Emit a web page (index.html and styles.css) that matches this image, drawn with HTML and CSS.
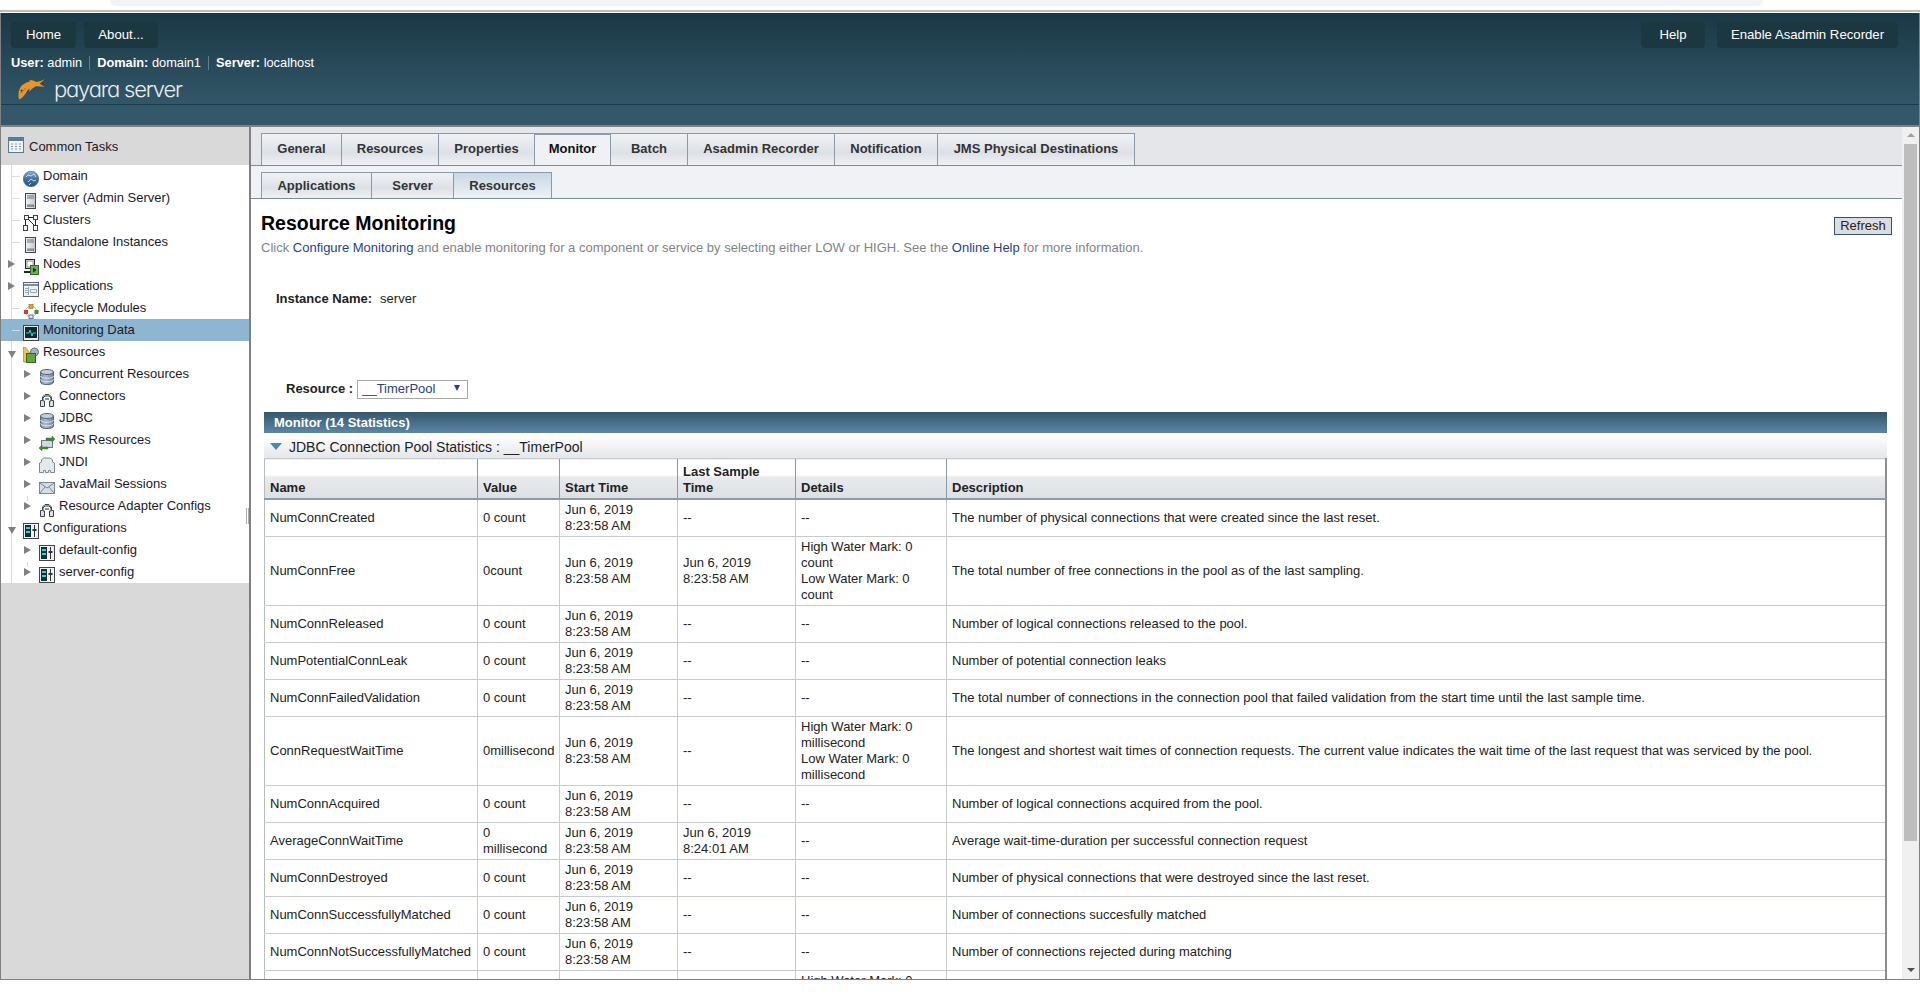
FILE: index.html
```html
<!DOCTYPE html>
<html lang="en">
<head>
<meta charset="utf-8">
<title>Payara Server</title>
<link rel="stylesheet" href="styles.css">
</head>
<body>
<svg class="defs" width="0" height="0">
  <defs>
    <linearGradient id="g-globe" x1="0" y1="0" x2="0" y2="1"><stop offset="0" stop-color="#8fb0cc"/><stop offset=".5" stop-color="#3f6f9f"/><stop offset="1" stop-color="#2a5585"/></linearGradient>
    <linearGradient id="g-srv" x1="0" y1="0" x2="1" y2="0"><stop offset="0" stop-color="#f2f3f4"/><stop offset="1" stop-color="#c4c8cc"/></linearGradient>
    <linearGradient id="g-db" x1="0" y1="0" x2="1" y2="0"><stop offset="0" stop-color="#7f93aa"/><stop offset=".4" stop-color="#a9b9ca"/><stop offset="1" stop-color="#6f8299"/></linearGradient>
  </defs>
  <symbol id="i-globe" viewBox="0 0 16 16"><circle cx="8" cy="8" r="7.700" fill="url(#g-globe)" stroke="#2e5a87" stroke-width=".6"/><path d="M3 6l2-2 3 1 3-2 2 3M5 11l3-3 3 2 2-1M6 14l2-2" stroke="#cfe0ee" fill="none" stroke-width=".9"/></symbol>
  <symbol id="i-server" viewBox="0 0 16 16"><rect x="2.500" y="0.500" width="10" height="15" fill="url(#g-srv)" stroke="#43484e"/><path d="M4 3h7M4 5h7" stroke="#6b737b"/><path d="M4 11.500h7v2.500H4z" fill="#6f767d"/><path d="M5 11.500v2.500M7 11.500v2.500M9 11.500v2.500" stroke="#d5d8db" stroke-width=".6"/></symbol>
  <symbol id="i-clusters" viewBox="0 0 16 16"><g fill="#f3f5f7" stroke="#3f444a"><rect x="1.500" y="0.500" width="4" height="4"/><rect x="10.500" y="0.500" width="4" height="4"/><rect x="0.500" y="10.500" width="4" height="5"/><rect x="10.500" y="10.500" width="4" height="5"/></g><path d="M5.500 2.500h5M5 4l6.500 6.500M2.500 5v5.500M12.500 5v5.500" stroke="#222" fill="none"/></symbol>
  <symbol id="i-nodes" viewBox="0 0 16 16"><rect x="2.500" y="0.500" width="9" height="9" fill="#e8eaec" stroke="#222"/><rect x="4" y="2" width="6" height="6" fill="#fff" stroke="#555" stroke-width=".6"/><path d="M1 13h8" stroke="#222" stroke-width="2"/><rect x="7.500" y="6.500" width="8" height="9" fill="#6fb04f" stroke="#2f6b2a"/><path d="M10 8.500l3.500 2.500-3.500 2.500z" fill="#123" /></symbol>
  <symbol id="i-apps" viewBox="0 0 16 16"><rect x="0.500" y="1.500" width="15" height="14" fill="#eef0f3" stroke="#5b6670"/><path d="M1 4h14" stroke="#7d8f9f" stroke-width="2"/><path d="M5.500 6v8M2 7.500h3M2 9.500h3M2 11.500h3M7.500 8.500h6v3h-6z" stroke="#98a7b4" fill="none"/></symbol>
  <symbol id="i-life" viewBox="0 0 16 16"><circle cx="8" cy="8.500" r="5.500" fill="none" stroke="#a8b0b8"/><rect x="6" y="1.500" width="4" height="4" fill="#e9a52f" stroke="#8c6412" stroke-width=".6"/><rect x="1" y="7" width="4" height="4" fill="#d03a2b"/><rect x="11.500" y="7" width="4" height="4" fill="#3f8f38"/><rect x="6" y="12" width="4" height="3.500" fill="#dbe3ea" stroke="#5d7ea3"/></symbol>
  <symbol id="i-mon" viewBox="0 0 16 16"><rect x="0.500" y="0.500" width="15" height="15" fill="#e8eaec" stroke="#444"/><rect x="2" y="2" width="12" height="11" fill="#0c2a33"/><path d="M3 8h3l1-3 2 6 1-3h3" stroke="#3fd0c4" fill="none"/></symbol>
  <symbol id="i-res" viewBox="0 0 16 16"><path d="M.5 0v15H7V6L2 0z" fill="#f3c14d" stroke="#b9851b" stroke-width=".7"/><circle cx="11.500" cy="5" r="4" fill="#9fb1c2" stroke="#62778a"/><rect x="3.500" y="6.500" width="9" height="9" fill="#63a53d" stroke="#2e6d1d"/></symbol>
  <symbol id="i-db" viewBox="0 0 16 16"><path d="M1.500 3v10c0 3.500 13 3.500 13 0V3z" fill="url(#g-db)" stroke="#55667a"/><ellipse cx="8" cy="3" rx="6.500" ry="2.500" fill="#c3cfda" stroke="#55667a"/><path d="M1.500 7c0 3 13 3 13 0M1.500 10.500c0 3 13 3 13 0" stroke="#dfe6ec" fill="none"/></symbol>
  <symbol id="i-conn" viewBox="0 0 16 16"><path d="M1.500 15.500v-6h2V6l2.500-2.500h4L12.500 6v3.500h2v6h-4v-5.500H12V7l-2-2H6L4 7v3h1.500v5.500z" fill="#dfe2e5" stroke="#3f464f"/><rect x="6" y="7" width="4" height="2" fill="#8a939c"/></symbol>
  <symbol id="i-jms" viewBox="0 0 16 16"><rect x="2.500" y="5.500" width="11" height="7" fill="#cfd8e1" stroke="#6a7c8c"/><path d="M7 3h6V1l3 3-3 3V5H7z" fill="#3f8f2f" stroke="#1f5c17" stroke-width=".4"/><path d="M9 12H3v-2l-3 3 3 3v-2h6z" fill="#3f8f2f" stroke="#1f5c17" stroke-width=".4"/></symbol>
  <symbol id="i-jndi" viewBox="0 0 16 16"><path d="M.5 15.500V6l2-1V3l2-2h7l2 2v2l2 1v9.500h-4v-2h-2v2H6.500v-2h-2v2z" fill="#e6e9ec" stroke="#7b8793"/></symbol>
  <symbol id="i-mail" viewBox="0 0 16 16"><rect x="0.500" y="3.500" width="15" height="11" fill="#d6dde4" stroke="#76889a"/><path d="M1 4l7 5 7-5M1 14l5-6M15 14l-5-6" stroke="#76889a" fill="none"/></symbol>
  <symbol id="i-cfg" viewBox="0 0 16 16"><rect x="0.500" y="0.500" width="15" height="15" fill="#eef0f2" stroke="#444"/><rect x="2" y="2" width="6" height="12" fill="#0f3038"/><path d="M3 5h4M3 9h4" stroke="#3fd0c4" stroke-width="2"/><path d="M11.500 2v12" stroke="#333"/><path d="M9.500 7h4" stroke="#333" stroke-width="2"/></symbol>
  <symbol id="i-tasks" viewBox="0 0 16 16"><rect x="0.500" y="0.500" width="15" height="15" fill="#f1f4f7" stroke="#587a9b"/><path d="M1 2.500h14" stroke="#587a9b" stroke-width="3"/><path d="M3 7h2M7 7h2M11 7h2M3 9.500h2M7 9.500h2M11 9.500h2M3 12h2M7 12h2M11 12h2" stroke="#8a97a3"/></symbol>
</svg>

<div class="browser"><div class="browser-strip"></div><div class="browser-rule"></div></div>

<div class="frame">
  <header class="masthead">
    <div class="mast-top">
      <nav class="mast-btns">
        <a class="mast-btn mast-home">Home</a>
        <a class="mast-btn mast-about">About...</a>
      </nav>
      <nav class="mast-btns">
        <a class="mast-btn mast-help">Help</a>
        <a class="mast-btn mast-rec">Enable Asadmin Recorder</a>
      </nav>
    </div>
    <div class="mast-info">
      <span class="info-item"><b>User:</b> admin</span>
      <span class="info-item"><b>Domain:</b> domain1</span>
      <span class="info-item"><b>Server:</b> localhost</span>
    </div>
    <div class="brand">
      <svg class="fish" viewBox="0 0 28 22"><path d="M27.500 1C25 3 22 3.500 19.500 4 18 3.500 15 1.500 12 2L13.500 3.200C9 4 5 6.500 3 10 1.500 13 1 17 2 21.500 4 20.500 6 19 7.500 17 9.500 14.500 10 12 12.500 10.500L12 13.500C14.500 12 15.500 9.500 19 8.200 22 8 25 8.500 27.500 9 25.500 7.500 23.500 6.500 22.500 5.500 24 4.500 26 3 27.500 1Z" fill="#e8962a"/><path d="M3.500 15c2-1 4-3 5-5" stroke="#8a5410" fill="none" stroke-width=".7"/><circle cx="4.500" cy="12.500" r="1" fill="#5e3508"/></svg>
      <span class="brand-name">payara server</span>
    </div>
    <div class="mast-rule"></div>
  </header>

  <div class="workspace">
    <aside class="nav">
      <div class="nav-title"><svg class="ico ico-tasks"><use href="#i-tasks"/></svg><span>Common Tasks</span></div>
      <div class="tree">
        <div class="row"><span class="tw tick"></span><svg class="ico"><use href="#i-globe"/></svg><span>Domain</span></div>
        <div class="row"><span class="tw tick"></span><svg class="ico"><use href="#i-server"/></svg><span>server (Admin Server)</span></div>
        <div class="row"><span class="tw tick"></span><svg class="ico"><use href="#i-clusters"/></svg><span>Clusters</span></div>
        <div class="row"><span class="tw tick"></span><svg class="ico"><use href="#i-server"/></svg><span>Standalone Instances</span></div>
        <div class="row"><span class="tw closed"></span><svg class="ico"><use href="#i-nodes"/></svg><span>Nodes</span></div>
        <div class="row"><span class="tw closed"></span><svg class="ico"><use href="#i-apps"/></svg><span>Applications</span></div>
        <div class="row"><span class="tw tick"></span><svg class="ico"><use href="#i-life"/></svg><span>Lifecycle Modules</span></div>
        <div class="row selected"><span class="tw tick"></span><svg class="ico"><use href="#i-mon"/></svg><span>Monitoring Data</span></div>
        <div class="row"><span class="tw open"></span><svg class="ico"><use href="#i-res"/></svg><span>Resources</span></div>
        <div class="row sub"><span class="tw closed"></span><svg class="ico"><use href="#i-db"/></svg><span>Concurrent Resources</span></div>
        <div class="row sub"><span class="tw closed"></span><svg class="ico"><use href="#i-conn"/></svg><span>Connectors</span></div>
        <div class="row sub"><span class="tw closed"></span><svg class="ico"><use href="#i-db"/></svg><span>JDBC</span></div>
        <div class="row sub"><span class="tw closed"></span><svg class="ico"><use href="#i-jms"/></svg><span>JMS Resources</span></div>
        <div class="row sub"><span class="tw closed"></span><svg class="ico"><use href="#i-jndi"/></svg><span>JNDI</span></div>
        <div class="row sub"><span class="tw closed"></span><svg class="ico"><use href="#i-mail"/></svg><span>JavaMail Sessions</span></div>
        <div class="row sub stem"><span class="tw closed"></span><svg class="ico"><use href="#i-conn"/></svg><span>Resource Adapter Configs</span></div>
        <div class="row"><span class="tw open"></span><svg class="ico"><use href="#i-cfg"/></svg><span>Configurations</span></div>
        <div class="row sub"><span class="tw closed"></span><svg class="ico"><use href="#i-cfg"/></svg><span>default-config</span></div>
        <div class="row sub stem"><span class="tw closed"></span><svg class="ico"><use href="#i-cfg"/></svg><span>server-config</span></div>
      </div>
      <div class="nav-grip"></div>
    </aside>

    <main class="main">
      <div class="main-scroll">
        <div class="tabs tabs-1">
          <a class="tab t-gen">General</a><a class="tab t-res">Resources</a><a class="tab t-prop">Properties</a><a class="tab t-mon active">Monitor</a><a class="tab t-bat">Batch</a><a class="tab t-asa">Asadmin Recorder</a><a class="tab t-not">Notification</a><a class="tab t-jms">JMS Physical Destinations</a>
        </div>
        <div class="tabs tabs-2">
          <a class="tab s-app">Applications</a><a class="tab s-srv">Server</a><a class="tab s-res current">Resources</a>
        </div>
        <div class="page">
          <div class="page-head">
            <div>
              <h1>Resource Monitoring</h1>
              <p class="help">Click <a>Configure Monitoring</a> and enable monitoring for a component or service by selecting either LOW or HIGH. See the <a>Online Help</a> for more information.</p>
            </div>
            <button class="refresh">Refresh</button>
          </div>
          <div class="instance"><b>Instance Name:</b><span>server</span></div>
          <div class="resource"><b>Resource :</b><span class="select"><span>__TimerPool</span><i class="select-arrow"></i></span></div>
          <section class="monitor">
            <div class="monitor-title">Monitor (14 Statistics)</div>
            <div class="monitor-sub"><i class="disclose"></i>JDBC Connection Pool Statistics : __TimerPool</div>
            <table class="stats">
              <colgroup><col class="c1"><col class="c2"><col class="c3"><col class="c4"><col class="c5"><col></colgroup>
              <thead><tr><th>Name</th><th>Value</th><th>Start Time</th><th>Last Sample Time</th><th>Details</th><th>Description</th></tr></thead>
              <tbody>
                <tr><td>NumConnCreated</td><td>0 count</td><td>Jun 6, 2019<br>8:23:58 AM</td><td>--</td><td>--</td><td>The number of physical connections that were created since the last reset.</td></tr>
                <tr><td>NumConnFree</td><td>0count</td><td>Jun 6, 2019<br>8:23:58 AM</td><td>Jun 6, 2019<br>8:23:58 AM</td><td>High Water Mark: 0 count<br>Low Water Mark: 0 count</td><td>The total number of free connections in the pool as of the last sampling.</td></tr>
                <tr><td>NumConnReleased</td><td>0 count</td><td>Jun 6, 2019<br>8:23:58 AM</td><td>--</td><td>--</td><td>Number of logical connections released to the pool.</td></tr>
                <tr><td>NumPotentialConnLeak</td><td>0 count</td><td>Jun 6, 2019<br>8:23:58 AM</td><td>--</td><td>--</td><td>Number of potential connection leaks</td></tr>
                <tr><td>NumConnFailedValidation</td><td>0 count</td><td>Jun 6, 2019<br>8:23:58 AM</td><td>--</td><td>--</td><td>The total number of connections in the connection pool that failed validation from the start time until the last sample time.</td></tr>
                <tr><td>ConnRequestWaitTime</td><td>0millisecond</td><td>Jun 6, 2019<br>8:23:58 AM</td><td>--</td><td>High Water Mark: 0 millisecond<br>Low Water Mark: 0 millisecond</td><td>The longest and shortest wait times of connection requests. The current value indicates the wait time of the last request that was serviced by the pool.</td></tr>
                <tr><td>NumConnAcquired</td><td>0 count</td><td>Jun 6, 2019<br>8:23:58 AM</td><td>--</td><td>--</td><td>Number of logical connections acquired from the pool.</td></tr>
                <tr><td>AverageConnWaitTime</td><td>0 millisecond</td><td>Jun 6, 2019<br>8:23:58 AM</td><td>Jun 6, 2019<br>8:24:01 AM</td><td>--</td><td>Average wait-time-duration per successful connection request</td></tr>
                <tr><td>NumConnDestroyed</td><td>0 count</td><td>Jun 6, 2019<br>8:23:58 AM</td><td>--</td><td>--</td><td>Number of physical connections that were destroyed since the last reset.</td></tr>
                <tr><td>NumConnSuccessfullyMatched</td><td>0 count</td><td>Jun 6, 2019<br>8:23:58 AM</td><td>--</td><td>--</td><td>Number of connections succesfully matched</td></tr>
                <tr><td>NumConnNotSuccessfullyMatched</td><td>0 count</td><td>Jun 6, 2019<br>8:23:58 AM</td><td>--</td><td>--</td><td>Number of connections rejected during matching</td></tr>
                <tr><td></td><td></td><td></td><td></td><td>High Water Mark: 0 count<br>Low Water Mark: 0 count</td><td></td></tr>
              </tbody>
            </table>
          </section>
        </div>
      </div>
      <div class="scrollbar">
        <i class="sb-up"></i>
        <div class="sb-thumb"></div>
        <i class="sb-down"></i>
      </div>
    </main>
  </div>
</div>
</body>
</html>
```
FILE: styles.css
```css
* { box-sizing: border-box; }
html, body { margin: 0; height: 999px; overflow: hidden; background: #fff; }
body { font-family: "Liberation Sans", Arial, sans-serif; font-size: 13px; color: #222; line-height: 16px; }
.defs { display: block; height: 0; }

.browser { height: 13px; padding: 0; }
.browser-strip { height: 6px; margin: 0 157px 0 110px; background: #f1f3f4; border-radius: 0 0 8px 8px; }
.browser-rule { height: 2px; margin-top: 4px; background: #bdbdbd; }

.frame { height: 967px; border: 1px solid #808080; border-top: 0; display: flex; flex-direction: column; overflow: hidden; }

.masthead { height: 114px; flex: none; background: linear-gradient(#1a3844, #33586a 85%); border-bottom: 2px solid #808080; color: #fff; padding: 0 0 0 10px; display: flex; flex-direction: column; }
.mast-top { display: flex; justify-content: space-between; padding: 9px 21px 0 0; }
.mast-btns { display: flex; gap: 8px; }
.mast-btns + .mast-btns { gap: 12px; }
.mast-btn { height: 26px; line-height: 26px; text-align: center; background: #1b3740; border-radius: 4px; font-size: 13.200px; color: #fff; }
.mast-home { width: 65px; }
.mast-about { width: 74px; }
.mast-help { width: 64px; }
.mast-rec { width: 181px; }
.mast-info { display: flex; margin-top: 7px; font-size: 12.800px; height: 16px; align-items: center; }
.info-item { padding-right: 7px; margin-right: 7px; border-right: 1px solid #5f7f8e; line-height: 14px; }
.info-item:last-child { border: 0; }
.brand { display: flex; align-items: center; margin-top: 5px; padding-left: 6px; height: 26px; }
.fish { width: 28px; height: 22px; flex: none; }
.brand-name { font-family: "Inter", sans-serif; font-feature-settings: "cv11"; font-weight: 300; font-size: 22px; letter-spacing: -1.200px; margin-left: 9px; color: #e9eef0; line-height: 24px; }
.mast-rule { height: 1px; margin-left: -10px; background: #1a3c4a; margin-top: 2px; }

.workspace { flex: 1; min-height: 0; display: flex; }

.nav { width: 250px; flex: none; background: #d9d9d9; border-right: 2px solid #808080; position: relative; font-size: 13px; color: #1a1a2a; }
.nav-title { height: 38px; display: flex; align-items: center; padding: 2px 0 0 7px; gap: 5px; }
.ico { width: 16px; height: 16px; flex: none; align-self: flex-end; margin-right: 4px; }
.ico-tasks { align-self: center; margin: -5px 0 0 0; }
.tree { background: #fff linear-gradient(#dcdcdc, #dcdcdc) 10px 0 / 1px 100% no-repeat; }
.row { height: 22px; display: flex; align-items: center; padding-left: 7px; white-space: nowrap; position: relative; }
.row.sub { padding-left: 23px; }
.row.selected { background: #8fb6d0; }
.stem::before { content: ""; position: absolute; left: 26px; top: 1px; width: 1px; height: 5px; background: #dcdcdc; }
.tw { width: 15px; height: 22px; flex: none; position: relative; }
.tick::after { content: ""; position: absolute; left: 4px; top: 11px; width: 8px; height: 1px; background: #dcdcdc; }
.closed::after { content: ""; position: absolute; left: 0; top: 7px; border-left: 7px solid #808080; border-top: 4px solid transparent; border-bottom: 4px solid transparent; }
.open::after { content: ""; position: absolute; left: 0; top: 10px; border-top: 7px solid #808080; border-left: 4px solid transparent; border-right: 4px solid transparent; }
.nav-grip { position: absolute; right: 0; top: 381px; width: 3px; height: 16px; border: 1px solid #aaa; border-width: 0 1px; background: #fff; }

.main { flex: 1; min-width: 0; display: flex; }
.main-scroll { flex: 1; min-width: 0; overflow: hidden; background: #fff; }
.scrollbar { width: 17px; flex: none; background: #f0f0f0; display: flex; flex-direction: column; align-items: center; position: relative; padding-top: 17px; }
.sb-thumb { width: 13px; height: 697px; background: #bdbdbd; }
.sb-up { position: absolute; top: 6px; border-bottom: 4px solid #a0a0a0; border-left: 4px solid transparent; border-right: 4px solid transparent; }
.sb-down { position: absolute; bottom: 7px; border-top: 4px solid #505050; border-left: 4px solid transparent; border-right: 4px solid transparent; }

.tabs { display: flex; padding-left: 10px; font-weight: bold; color: #333; }
.tabs-1 { height: 39px; padding-top: 6px; background: #e4e6ea; border-bottom: 1px solid #7b8c9a; }
.tabs-2 { height: 33px; padding-top: 6px; background: #f0f2f5; border-bottom: 1px solid #7b8c9a; }
.tab { display: block; text-align: center; border: 1px solid #8b9aa6; border-bottom: 0; border-left-width: 0; background: linear-gradient(#f0f2f5, #dde1e6 60%, #eef0f3); line-height: 30px; font-size: 13px; }
.tab:first-child { border-left-width: 1px; }
.tabs-2 .tab { line-height: 25px; }
.tab.active { background: #eff1f4; border-top: 2px solid #8b9aa6; color: #111; line-height: 28px; }
.tab.current { background: linear-gradient(#c8d8e4, #eef2f6); }
.t-gen { width: 81px; } .t-res { width: 97px; } .t-prop { width: 96px; } .t-mon { width: 76px; } .t-bat { width: 77px; }
.t-asa { width: 147px; } .t-not { width: 103px; } .t-jms { width: 197px; }
.s-app { width: 111px; } .s-srv { width: 82px; } .s-res { width: 98px; }

.page { padding: 0 10px 0 10px; }
.page-head { display: flex; justify-content: space-between; align-items: flex-start; }
h1 { margin: 12px 0 0; font-size: 19.500px; line-height: 24px; font-weight: bold; color: #000; }
.help { margin: 5px 0 0; color: #7f8488; font-size: 13px; }
.help a { color: #1f3f9c; }
.refresh { margin: 18px 0 0 0; width: 58px; height: 18px; padding: 0; font: 13px/16px "Liberation Sans", Arial, sans-serif; color: #222; background: #dcdde0; border: 1px solid #3a5068; }
.instance { margin: 35px 0 0 15px; display: flex; gap: 8px; align-items: center; height: 16px; }
.resource { margin: 72px 0 0 25px; display: flex; align-items: center; gap: 4px; height: 20px; }
.select { width: 111px; height: 19px; border: 1px solid #a9a9a9; color: #27408b; display: flex; justify-content: space-between; align-items: center; padding: 0 7px 0 4px; }
.select-arrow { border-top: 6px solid #1f3f9c; border-left: 3px solid transparent; border-right: 3px solid transparent; margin-top: -2px; }

.monitor { width: 1623px; margin: 13px 0 0 3px; }
.monitor-title { height: 21px; line-height: 21px; padding-left: 10px; background: linear-gradient(#34566b, #5b86a6); color: #fff; font-weight: bold; font-size: 13px; }
.monitor-sub { margin-top: 2px; height: 23px; line-height: 22px; padding-left: 6px; background: linear-gradient(#fff, #e4e6e9); font-size: 14px; display: flex; align-items: center; color: #222; }
.disclose { width: 0; height: 0; margin-right: 7px; border-top: 7px solid #4f86b5; border-left: 6px solid transparent; border-right: 6px solid transparent; }

.stats { width: 1623px; table-layout: fixed; border-collapse: collapse; font-size: 13px; border-left: 1px solid #b5bcc2; border-right: 2px solid #8e8e8e; }
.c1 { width: 213px; } .c2 { width: 82px; } .c3 { width: 118px; } .c4 { width: 118px; } .c5 { width: 151px; }
.stats th { height: 40px; text-align: left; vertical-align: bottom; padding: 0 5px 2px 5px; font-weight: bold; color: #222; background: linear-gradient(#fff 40%, #e8eaec 45%, #dde0e3); border-left: 1px solid #8b9aa6; border-bottom: 2px solid #8b9aa6; border-top: 1px solid #c8ccd0; }
.stats th:first-child { border-left: 0; }
.stats td { padding: 2px 5px 2px 5px; vertical-align: middle; border-left: 1px solid #c8ccd0; border-bottom: 1px solid #c8ccd0; color: #222; }
.stats td:first-child { border-left: 0; }
.stats td:last-child { padding-right: 20px; }
```
